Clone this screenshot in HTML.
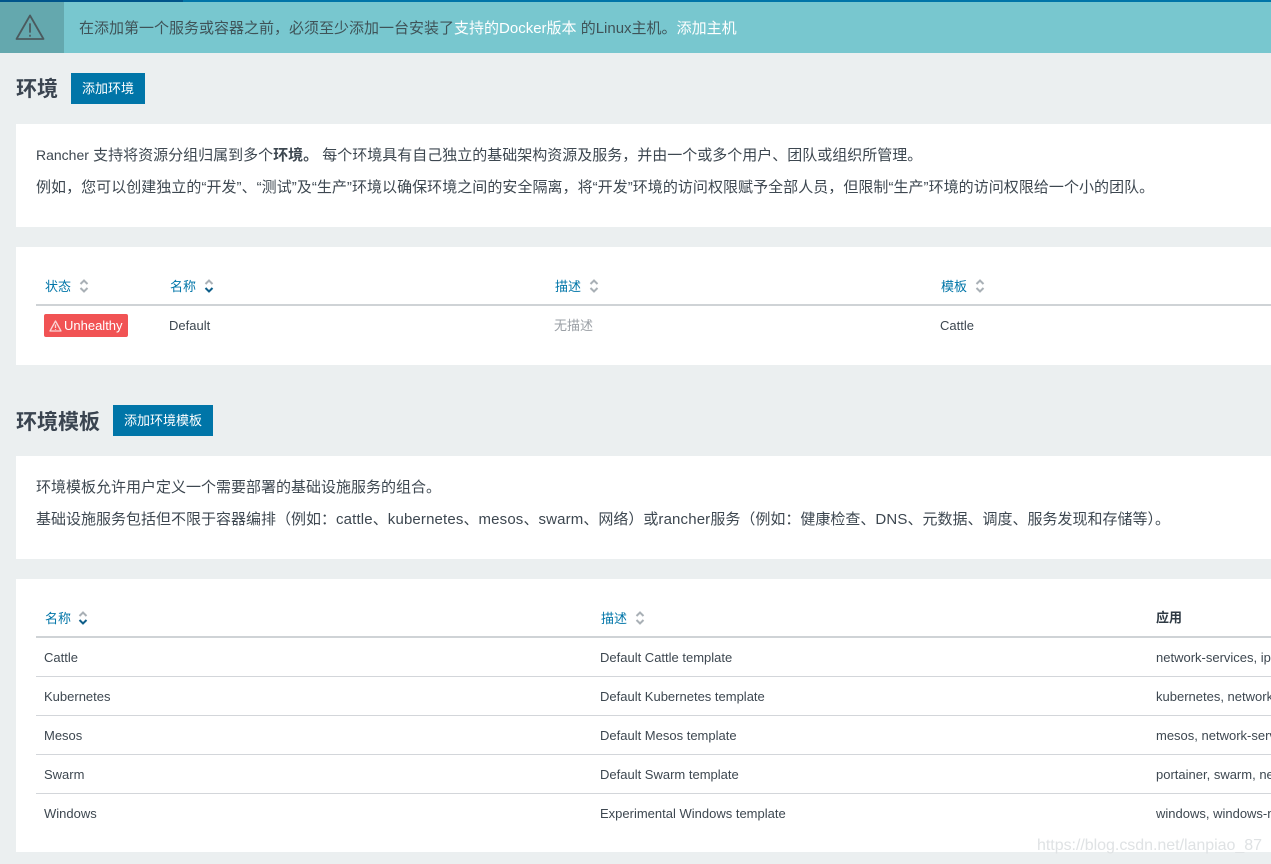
<!DOCTYPE html>
<html lang="zh"><head><meta charset="utf-8"><style>
html,body{margin:0;padding:0}
body{width:1271px;height:864px;overflow:hidden;position:relative;background:#ebeff0;font-family:"Liberation Sans","Noto Sans CJK SC",sans-serif;font-size:13px;color:#3d4750}
.a{position:absolute}
.t{position:absolute;white-space:nowrap;line-height:20px}
.card{position:absolute;left:16px;width:1255px;background:#fff}
.btn{position:absolute;background:#0075a8;color:#fff;height:31px;line-height:31px;text-align:center;font-size:13px}
h1{position:absolute;margin:0;font-size:21px;line-height:30px;font-weight:700;color:#3a4450}
.p{font-size:15px;color:#3d4750}
.l{letter-spacing:.15px}
.th{font-size:13px;color:#0075a8}
.line{position:absolute;height:1px;background:#d3d6da;left:36px;width:1235px}
.hline{position:absolute;height:2px;background:#cfd3d6;left:36px;width:1235px}
.sm{font-size:13px}
svg{position:absolute;overflow:visible}
</style></head><body>
<div class="a" style="left:0;top:0;width:1271px;height:53px;background:#78c7cf"></div>
<div class="a" style="left:0;top:0;width:64px;height:53px;background:#64a8ae"></div>
<div class="a" style="left:0;top:0;width:1271px;height:2px;background:#0075a8"></div>
<div class="a" style="left:0;top:0;width:183px;height:2px;background:#00558b"></div>
<svg style="left:15px;top:14px" width="30" height="27" viewBox="0 0 30 27" fill="none" stroke="#4b5a5e" stroke-width="1.8" stroke-linejoin="round" stroke-linecap="round"><path d="M15 1.5 L1.5 25 H28.5 Z"/><path d="M15 10 V18"/><path d="M15 21.5 V22"/></svg>
<div class="t p" style="left:79px;top:19px;color:#3f5358">在添加第一个服务或容器之前，必须至少添加一台安装了<span style="color:#fff">支持的Docker版本</span> 的Linux主机。<span style="color:#fff">添加主机</span></div>

<h1 style="left:16px;top:75px">环境</h1>
<div class="btn" style="left:71px;top:73px;width:74px">添加环境</div>
<div class="card" style="top:124px;height:103px"></div>
<div class="t p" style="left:36px;top:145px"><span style="font-size:14px">Rancher</span> 支持将资源分组归属到多个<b>环境。</b> 每个环境具有自己独立的基础架构资源及服务，并由一个或多个用户、团队或组织所管理。</div>
<div class="t p" style="left:36px;top:178px;letter-spacing:.04px">例如，您可以创建独立的“开发”、“测试”及“生产”环境以确保环境之间的安全隔离，将“开发”环境的访问权限赋予全部人员，但限制“生产”环境的访问权限给一个小的团队。</div>

<div class="card" style="top:247px;height:118px"></div>
<div class="t th" style="left:45px;top:277px">状态</div>
<svg style="left:79px;top:279px" width="10" height="14" fill="none" stroke="#a9b0b6" stroke-width="2"><path d="M1.5 5 L5 1.5 L8.5 5"/><path d="M1.5 9 L5 12.5 L8.5 9"/></svg>
<div class="t th" style="left:170px;top:277px">名称</div>
<svg style="left:204px;top:279px" width="10" height="14" fill="none" stroke-width="2"><path stroke="#a9b0b6" d="M1.5 5 L5 1.5 L8.5 5"/><path stroke="#0f5f8a" d="M1.5 9 L5 12.5 L8.5 9"/></svg>
<div class="t th" style="left:555px;top:277px">描述</div>
<svg style="left:589px;top:279px" width="10" height="14" fill="none" stroke="#a9b0b6" stroke-width="2"><path d="M1.5 5 L5 1.5 L8.5 5"/><path d="M1.5 9 L5 12.5 L8.5 9"/></svg>
<div class="t th" style="left:941px;top:277px">模板</div>
<svg style="left:975px;top:279px" width="10" height="14" fill="none" stroke="#a9b0b6" stroke-width="2"><path d="M1.5 5 L5 1.5 L8.5 5"/><path d="M1.5 9 L5 12.5 L8.5 9"/></svg>
<div class="hline" style="top:304px"></div>
<div class="a" style="left:44px;top:314px;width:84px;height:23px;background:#f15354;border-radius:2px"></div>
<svg style="left:49px;top:320px" width="13" height="12" fill="none" stroke="#fbd5d5" stroke-width="1.3" stroke-linejoin="round"><path d="M6.5 1 L1 11 H12 Z"/><path d="M6.5 4.5 V8"/><path d="M6.5 9 V9.8"/></svg>
<div class="t" style="left:64px;top:316px;color:#fff;font-size:13px">Unhealthy</div>
<div class="t sm" style="left:169px;top:316px">Default</div>
<div class="t" style="left:554px;top:316px;color:#9a9fa5">无描述</div>
<div class="t sm" style="left:940px;top:316px">Cattle</div>

<h1 style="left:16px;top:408px">环境模板</h1>
<div class="btn" style="left:113px;top:405px;width:100px">添加环境模板</div>
<div class="card" style="top:456px;height:103px"></div>
<div class="t p" style="left:36px;top:478px">环境模板允许用户定义一个需要部署的基础设施服务的组合。</div>
<div class="t p" style="left:36px;top:510px">基础设施服务包括但不限于容器编排（例如：<span class="l">cattle</span>、<span class="l">kubernetes</span>、<span class="l">mesos</span>、<span class="l">swarm</span>、网络）或<span class="l">rancher</span>服务（例如：健康检查、<span class="l">DNS</span>、元数据、调度、服务发现和存储等）。</div>

<div class="card" style="top:579px;height:273px"></div>
<div class="t th" style="left:45px;top:609px">名称</div>
<svg style="left:78px;top:611px" width="10" height="14" fill="none" stroke-width="2"><path stroke="#a9b0b6" d="M1.5 5 L5 1.5 L8.5 5"/><path stroke="#0f5f8a" d="M1.5 9 L5 12.5 L8.5 9"/></svg>
<div class="t th" style="left:601px;top:609px">描述</div>
<svg style="left:635px;top:611px" width="10" height="14" fill="none" stroke="#a9b0b6" stroke-width="2"><path d="M1.5 5 L5 1.5 L8.5 5"/><path d="M1.5 9 L5 12.5 L8.5 9"/></svg>
<div class="t" style="left:1156px;top:608px;font-weight:700;color:#2f3a44">应用</div>
<div class="hline" style="top:636px"></div>
<div class="line" style="top:676px"></div>
<div class="line" style="top:715px"></div>
<div class="line" style="top:754px"></div>
<div class="line" style="top:793px"></div>

<div class="t sm" style="left:44px;top:648px">Cattle</div>
<div class="t sm" style="left:600px;top:648px">Default Cattle template</div>
<div class="t sm" style="left:1156px;top:648px">network-services, ip</div>
<div class="t sm" style="left:44px;top:687px">Kubernetes</div>
<div class="t sm" style="left:600px;top:687px">Default Kubernetes template</div>
<div class="t sm" style="left:1156px;top:687px">kubernetes, network</div>
<div class="t sm" style="left:44px;top:726px">Mesos</div>
<div class="t sm" style="left:600px;top:726px">Default Mesos template</div>
<div class="t sm" style="left:1156px;top:726px">mesos, network-serv</div>
<div class="t sm" style="left:44px;top:765px">Swarm</div>
<div class="t sm" style="left:600px;top:765px">Default Swarm template</div>
<div class="t sm" style="left:1156px;top:765px">portainer, swarm, ne</div>
<div class="t sm" style="left:44px;top:804px">Windows</div>
<div class="t sm" style="left:600px;top:804px">Experimental Windows template</div>
<div class="t sm" style="left:1156px;top:804px">windows, windows-n</div>
<div class="t" style="left:1037px;top:836px;font-size:16px;color:#dfe2e4;letter-spacing:-.03px">https://blog.csdn.net/lanpiao_87</div>
</body></html>
